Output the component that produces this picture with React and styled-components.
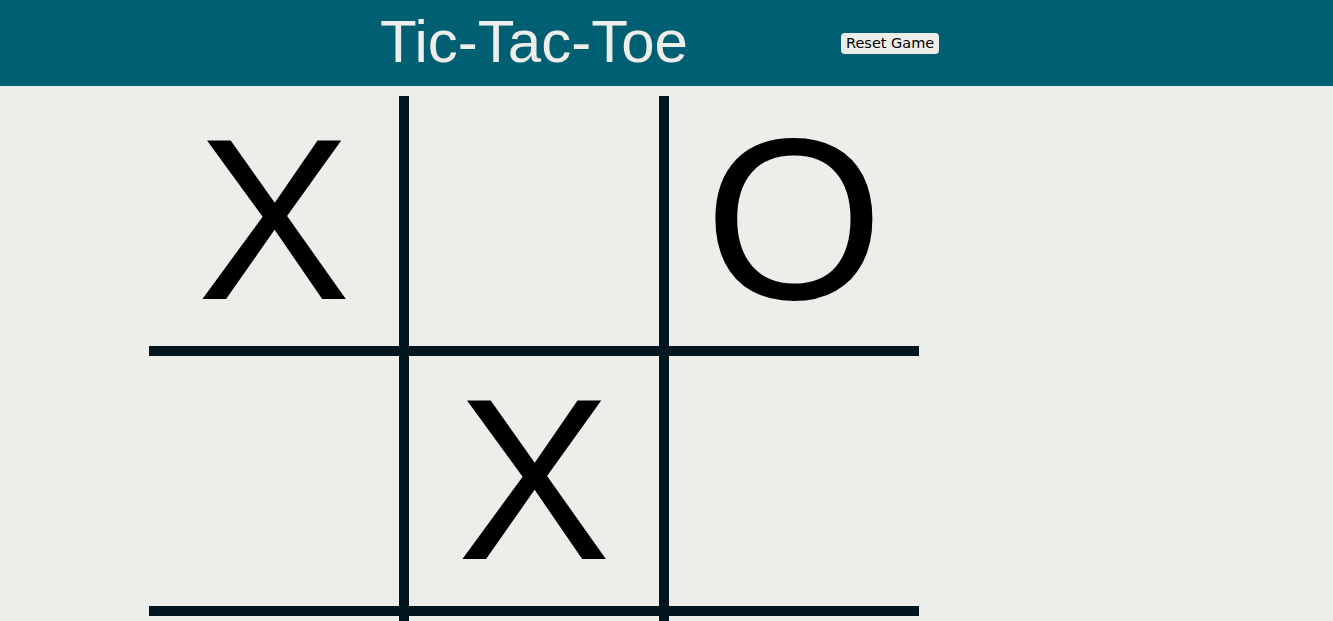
import styled, { createGlobalStyle } from "styled-components";
import { useState } from "react";

const GlobalStyle = createGlobalStyle`
	body {
		margin: 0;
		background: #edede9;
		font-family: "Liberation Sans", Arial, sans-serif;
		overflow: hidden;
	}
`;

const Header = styled.header`
	display: flex;
	align-items: center;
	height: 86px;
	padding-left: 149px;
	background: #005f73;
`;

const Title = styled.h1`
	width: 770px;
	margin: 0;
	text-align: center;
	font-size: 60px;
	font-weight: 400;
	line-height: 1.149;
	color: #edede9;
	transform: translateY(-1px);
`;

const ResetBtn = styled.button`
	margin-left: -78px;
	padding: 1px 5px;
	border: 0 none;
	border-radius: 4px;
	background: #edede9;
	color: #000;
	font-family: "DejaVu Sans", Verdana, sans-serif;
	font-size: 14.5px;
	line-height: 19px;
	cursor: pointer;
`;

const Board = styled.div`
	display: grid;
	grid-template-columns: repeat(3, 250px);
	grid-auto-rows: 250px;
	gap: 10px;
	width: fit-content;
	margin: 10px 0 0 149px;
	background: #01161e;
`;

const Cell = styled.div`
	display: flex;
	align-items: center;
	justify-content: center;
	padding-bottom: 3px;
	background: #edede9;
	color: #000;
	font-size: 230px;
	line-height: 1;
	cursor: pointer;
`;

const START = ["X", "", "O", "", "X", "", "", "", ""];

const App = () => {
	const [cells, setCells] = useState(START);

	const handleReset = () => {
		setCells(Array(9).fill(""));
	};

	return (
		<>
			<GlobalStyle />
			<Header>
				<Title>Tic-Tac-Toe</Title>
				<ResetBtn onClick={handleReset}>Reset Game</ResetBtn>
			</Header>
			<Board>
				{cells.map((mark, i) => (
					<Cell key={i}>{mark}</Cell>
				))}
			</Board>
		</>
	);
};

export default App;
